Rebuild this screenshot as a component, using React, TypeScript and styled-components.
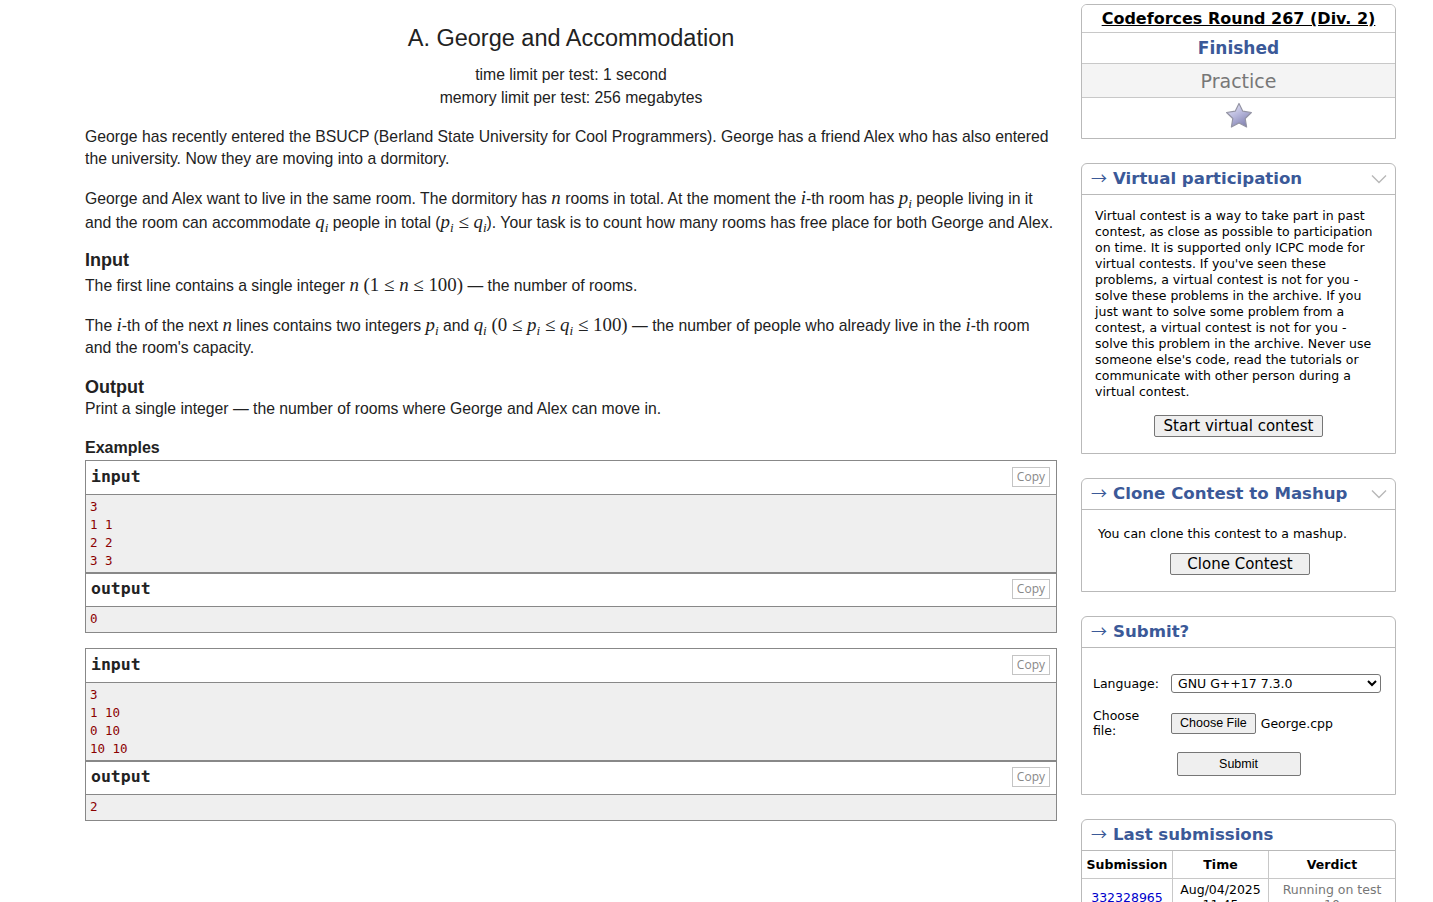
import React from 'react';
import styled, { createGlobalStyle } from 'styled-components';

const Global = createGlobalStyle`
  html, body { margin: 0; padding: 0; background: #fff; }
  body { font-family: "Liberation Sans", Arial, sans-serif; color: #222; }
`;

const Page = styled.div`
  display: flex;
  align-items: flex-start;
  gap: 24px;
  padding-left: 85px;
`;

const Main = styled.main`
  width: 972px;
  flex: none;
  font-size: 15.75px;
  line-height: 22px;
`;

const Header = styled.div`
  text-align: center;
  padding-top: 23px;
`;

const Title = styled.div`
  font-size: 23.5px;
  line-height: 30px;
`;

const Limits = styled.div`
  margin-top: 10px;
  line-height: 23px;
`;

const Para = styled.p<{ $gap?: number; $lh?: number }>`
  margin: ${(p) => p.$gap ?? 18}px 0 0;
  line-height: ${(p) => p.$lh ?? 22}px;
`;

const SectionTitle = styled.div<{ $gap?: number }>`
  font-weight: bold;
  font-size: 18px;
  line-height: 25px;
  margin-top: ${(p) => p.$gap ?? 14}px;
`;

const ExamplesTitle = styled.div`
  font-weight: bold;
  font-size: 16px;
  line-height: 22px;
  margin-top: 17px;
`;

const M = styled.span`
  font-family: "Liberation Serif", "DejaVu Serif", serif;
  font-size: 1.2em;
  line-height: 0;
`;

const V = styled.i`
  font-family: "Liberation Serif", "DejaVu Serif", serif;
  font-style: italic;
`;

const Rel = styled.span`
  padding: 0 0.25em;
`;

const Sub = styled.sub`
  font-size: 0.7em;
  vertical-align: -0.28em;
  line-height: 0;
`;

const Sample = styled.div`
  margin-top: 1px;
  & + & {
    margin-top: 15px;
  }
`;

const IOBlock = styled.div`
  border: 1px solid #888;
`;

const IOHead = styled.div<{ $h: number }>`
  box-sizing: border-box;
  display: flex;
  align-items: center;
  justify-content: space-between;
  height: ${(p) => p.$h}px;
  padding: 0 6px 2px 5px;
  border-bottom: 1px solid #888;
  font-family: "DejaVu Sans Mono", "Liberation Mono", monospace;
  font-weight: bold;
  font-size: 16.5px;
  color: #222;
`;

const CopyBtn = styled.div`
  border: 1px solid #c4c4c4;
  font-family: "Open Sans", "Liberation Sans", sans-serif;
  font-weight: normal;
  font-size: 12px;
  color: #888;
  height: 18px;
  line-height: 18px;
  padding: 0 4px;
`;

const Pre = styled.pre<{ $pad: string }>`
  margin: 0;
  background: #efefef;
  padding: ${(p) => p.$pad};
  font-family: "DejaVu Sans Mono", "Liberation Mono", monospace;
  font-size: 12.5px;
  line-height: 18px;
  color: #8b0000;
`;

/* ---------- sidebar ---------- */

const Sidebar = styled.aside`
  width: 315px;
  flex: none;
  margin-top: 4px;
  font-family: "DejaVu Sans", Verdana, sans-serif;
  font-size: 12.5px;
  color: #000;
  display: flex;
  flex-direction: column;
  gap: 24px;
`;

const Box = styled.section`
  border: 1px solid #b9b9b9;
  border-radius: 6px 6px 0 0;
  overflow: hidden;
  background: #fff;
`;

const InfoRow = styled.div<{ $h: number; $bg?: string }>`
  height: ${(p) => p.$h}px;
  display: flex;
  align-items: center;
  justify-content: center;
  background: ${(p) => p.$bg ?? '#fff'};
  & + & {
    border-top: 1px solid #c8c8c8;
  }
`;

const StarWrap = styled.div`
  display: flex;
  margin-bottom: 4px;
`;

const ContestLink = styled.a`
  font-weight: bold;
  font-size: 16px;
  color: #000;
  text-decoration: underline;
`;

const Finished = styled.span`
  font-weight: bold;
  font-size: 17px;
  color: #3b5998;
`;

const Practice = styled.span`
  font-size: 19px;
  color: #777;
`;

const BoxHead = styled.div`
  height: 30px;
  display: flex;
  align-items: center;
  justify-content: space-between;
  padding: 0 8px 0 9px;
  border-bottom: 1px solid #b9b9b9;
  color: #3b5998;
  font-weight: bold;
  font-size: 16.6px;
  line-height: 20px;
`;

const HeadText = styled.span`
  line-height: 20px;
  margin-top: -1px;
`;

const Arrow = styled.span`
  font-weight: normal;
  font-family: "Noto Sans CJK JP", "DejaVu Sans", sans-serif;
  font-size: 16px;
  line-height: 0;
  margin-right: 6px;
`;

const BoxBody = styled.div<{ $pad?: string }>`
  padding: ${(p) => p.$pad ?? '14px 13px 15px'};
  line-height: 16px;
`;

const Center = styled.div<{ $gap?: number }>`
  display: flex;
  justify-content: center;
  margin-top: ${(p) => p.$gap ?? 0}px;
`;

const BigButton = styled.button<{ $px?: number }>`
  font-family: "DejaVu Sans", Verdana, sans-serif;
  font-size: 15px;
  height: 22px;
  line-height: 18px;
  padding: 0 ${(p) => p.$px ?? 9}px;
  background: #efefef;
  border: 1px solid #767676;
  border-radius: 2px;
  color: #000;
`;

const FormGrid = styled.div`
  display: grid;
  grid-template-columns: 78px 1fr;
  row-gap: 15px;
  align-items: center;
  padding: 26px 14px 0 11px;
`;

const Label = styled.div`
  line-height: 15px;
`;

const Select = styled.select`
  width: 210px;
  height: 19px;
  font-family: "DejaVu Sans", Verdana, sans-serif;
  font-size: 12.5px;
  border: 1px solid #767676;
  border-radius: 3px;
  padding: 0 2px;
  background: #fff;
  color: #000;
`;

const FileRow = styled.div`
  display: flex;
  align-items: center;
  gap: 5px;
`;

const SmallButton = styled.button<{ $w?: number; $h?: number }>`
  font-family: "Liberation Sans", Arial, sans-serif;
  font-size: 12.5px;
  height: ${(p) => p.$h ?? 21}px;
  width: ${(p) => (p.$w ? `${p.$w}px` : 'auto')};
  padding: 0 8px;
  background: #efefef;
  border: 1px solid #767676;
  border-radius: 2px;
  color: #000;
`;

const FormFoot = styled.div`
  display: flex;
  justify-content: center;
  padding: 14px 0 18px;
`;

const Table = styled.table`
  width: 100%;
  border-collapse: collapse;
  font-size: 12.5px;
  line-height: 15px;
`;

const Th = styled.th<{ $w?: number }>`
  height: 27px;
  width: ${(p) => (p.$w ? `${p.$w}px` : 'auto')};
  border-right: 1px solid #c8c8c8;
  border-bottom: 1px solid #c8c8c8;
  font-weight: bold;
  text-align: center;
  padding: 0;
  &:last-child {
    border-right: none;
  }
`;

const Td = styled.td<{ $color?: string }>`
  border-right: 1px solid #c8c8c8;
  text-align: center;
  padding: 3px 2px;
  vertical-align: middle;
  color: ${(p) => p.$color ?? '#000'};
  &:last-child {
    border-right: none;
  }
`;

const SubLink = styled.a`
  color: #0000cc;
  text-decoration: none;
`;

const Chevron = () => (
  <svg width="16" height="10" viewBox="0 0 16 10">
    <polyline points="1,1.5 8,8.5 15,1.5" fill="none" stroke="#b8b8b8" strokeWidth="1.4" />
  </svg>
);

const Star = () => (
  <svg width="28" height="28" viewBox="0 0 28 28">
    <defs>
      <linearGradient id="sg" x1="0.2" y1="0" x2="0.8" y2="1">
        <stop offset="0" stopColor="#e6e6f6" />
        <stop offset="0.45" stopColor="#b8b8dc" />
        <stop offset="1" stopColor="#7c7cac" />
      </linearGradient>
    </defs>
    <polygon
      points="14,1.5 17.8,9.2 26.4,10.5 20.2,16.5 21.6,25 14,21 6.4,25 7.8,16.5 1.6,10.5 10.2,9.2"
      fill="url(#sg)"
      stroke="#9494a4"
      strokeWidth="1.2"
      strokeLinejoin="round"
    />
  </svg>
);

const Example = ({ input, output }: { input: string; output: string }) => (
  <Sample>
    <IOBlock>
      <IOHead $h={34}>
        input<CopyBtn>Copy</CopyBtn>
      </IOHead>
      <Pre $pad="3px 4px 2px">{input}</Pre>
    </IOBlock>
    <IOBlock>
      <IOHead $h={33}>
        output<CopyBtn>Copy</CopyBtn>
      </IOHead>
      <Pre $pad="3px 4px 4px">{output}</Pre>
    </IOBlock>
  </Sample>
);

const Pi = ({ v }: { v: string }) => (
  <>
    <V>{v}</V>
    <Sub>
      <V>i</V>
    </Sub>
  </>
);

const Le = () => <Rel>≤</Rel>;

const BoxTitle = ({ children }: { children: React.ReactNode }) => (
  <HeadText>
    <Arrow>→</Arrow>
    {children}
  </HeadText>
);

export default function App() {
  return (
    <>
      <Global />
      <Page>
        <Main>
          <Header>
            <Title>A. George and Accommodation</Title>
            <Limits>
              <div>time limit per test: 1 second</div>
              <div>memory limit per test: 256 megabytes</div>
            </Limits>
          </Header>
          <Para $gap={17}>
            George has recently entered the BSUCP (Berland State University for Cool Programmers). George has a friend
            Alex who has also entered the university. Now they are moving into a dormitory.
          </Para>
          <Para $gap={17} $lh={24}>
            George and Alex want to live in the same room. The dormitory has{' '}
            <M>
              <V>n</V>
            </M>{' '}
            rooms in total. At the moment the{' '}
            <M>
              <V>i</V>
            </M>
            -th room has{' '}
            <M>
              <Pi v="p" />
            </M>{' '}
            people living in it and the room can accommodate{' '}
            <M>
              <Pi v="q" />
            </M>{' '}
            people in total (
            <M>
              <Pi v="p" />
              <Le />
              <Pi v="q" />
            </M>
            ). Your task is to count how many rooms has free place for both George and Alex.
          </Para>
          <SectionTitle $gap={13}>Input</SectionTitle>
          <Para $gap={2}>
            The first line contains a single integer{' '}
            <M>
              <V>n</V> (1<Le />
              <V>n</V>
              <Le />
              100)
            </M>{' '}
            — the number of rooms.
          </Para>
          <Para>
            The{' '}
            <M>
              <V>i</V>
            </M>
            -th of the next{' '}
            <M>
              <V>n</V>
            </M>{' '}
            lines contains two integers{' '}
            <M>
              <Pi v="p" />
            </M>{' '}
            and{' '}
            <M>
              <Pi v="q" /> (0<Le />
              <Pi v="p" />
              <Le />
              <Pi v="q" />
              <Le />
              100)
            </M>{' '}
            — the number of people who already live in the{' '}
            <M>
              <V>i</V>
            </M>
            -th room and the room's capacity.
          </Para>
          <SectionTitle $gap={16}>Output</SectionTitle>
          <Para $gap={-2}>Print a single integer — the number of rooms where George and Alex can move in.</Para>
          <ExamplesTitle>Examples</ExamplesTitle>
          <Example input={'3\n1 1\n2 2\n3 3'} output={'0'} />
          <Example input={'3\n1 10\n0 10\n10 10'} output={'2'} />
        </Main>

        <Sidebar>
          <Box>
            <InfoRow $h={27}>
              <ContestLink href="#">Codeforces Round 267 (Div. 2)</ContestLink>
            </InfoRow>
            <InfoRow $h={30}>
              <Finished>Finished</Finished>
            </InfoRow>
            <InfoRow $h={33} $bg="#f4f4f4">
              <Practice>Practice</Practice>
            </InfoRow>
            <InfoRow $h={40}>
              <StarWrap>
                <Star />
              </StarWrap>
            </InfoRow>
          </Box>

          <Box>
            <BoxHead>
              <BoxTitle>Virtual participation</BoxTitle>
              <Chevron />
            </BoxHead>
            <BoxBody $pad="13px 13px 16px">
              Virtual contest is a way to take part in past contest, as close as possible to participation on time. It is
              supported only ICPC mode for virtual contests. If you've seen these problems, a virtual contest is not for
              you - solve these problems in the archive. If you just want to solve some problem from a contest, a virtual
              contest is not for you - solve this problem in the archive. Never use someone else's code, read the
              tutorials or communicate with other person during a virtual contest.
              <Center $gap={15}>
                <BigButton>Start virtual contest</BigButton>
              </Center>
            </BoxBody>
          </Box>

          <Box>
            <BoxHead>
              <BoxTitle>Clone Contest to Mashup</BoxTitle>
              <Chevron />
            </BoxHead>
            <BoxBody $pad="16px 13px 16px 16px">
              You can clone this contest to a mashup.
              <Center $gap={11}>
                <BigButton $px={16}>Clone Contest</BigButton>
              </Center>
            </BoxBody>
          </Box>

          <Box>
            <BoxHead>
              <BoxTitle>Submit?</BoxTitle>
            </BoxHead>
            <FormGrid>
              <Label>Language:</Label>
              <Select defaultValue="g17">
                <option value="g17">GNU G++17 7.3.0</option>
              </Select>
              <Label>
                Choose
                <br />
                file:
              </Label>
              <FileRow>
                <SmallButton $h={21}>Choose File</SmallButton>
                <span>George.cpp</span>
              </FileRow>
            </FormGrid>
            <FormFoot>
              <SmallButton $w={124} $h={24}>
                Submit
              </SmallButton>
            </FormFoot>
          </Box>

          <Box>
            <BoxHead>
              <BoxTitle>Last submissions</BoxTitle>
            </BoxHead>
            <Table>
              <thead>
                <tr>
                  <Th $w={90}>Submission</Th>
                  <Th $w={95}>Time</Th>
                  <Th>Verdict</Th>
                </tr>
              </thead>
              <tbody>
                <tr>
                  <Td>
                    <SubLink href="#">332328965</SubLink>
                  </Td>
                  <Td>
                    Aug/04/2025
                    <br />
                    11:45
                  </Td>
                  <Td $color="#777">
                    Running on test
                    <br />
                    10
                  </Td>
                </tr>
              </tbody>
            </Table>
          </Box>
        </Sidebar>
      </Page>
    </>
  );
}
